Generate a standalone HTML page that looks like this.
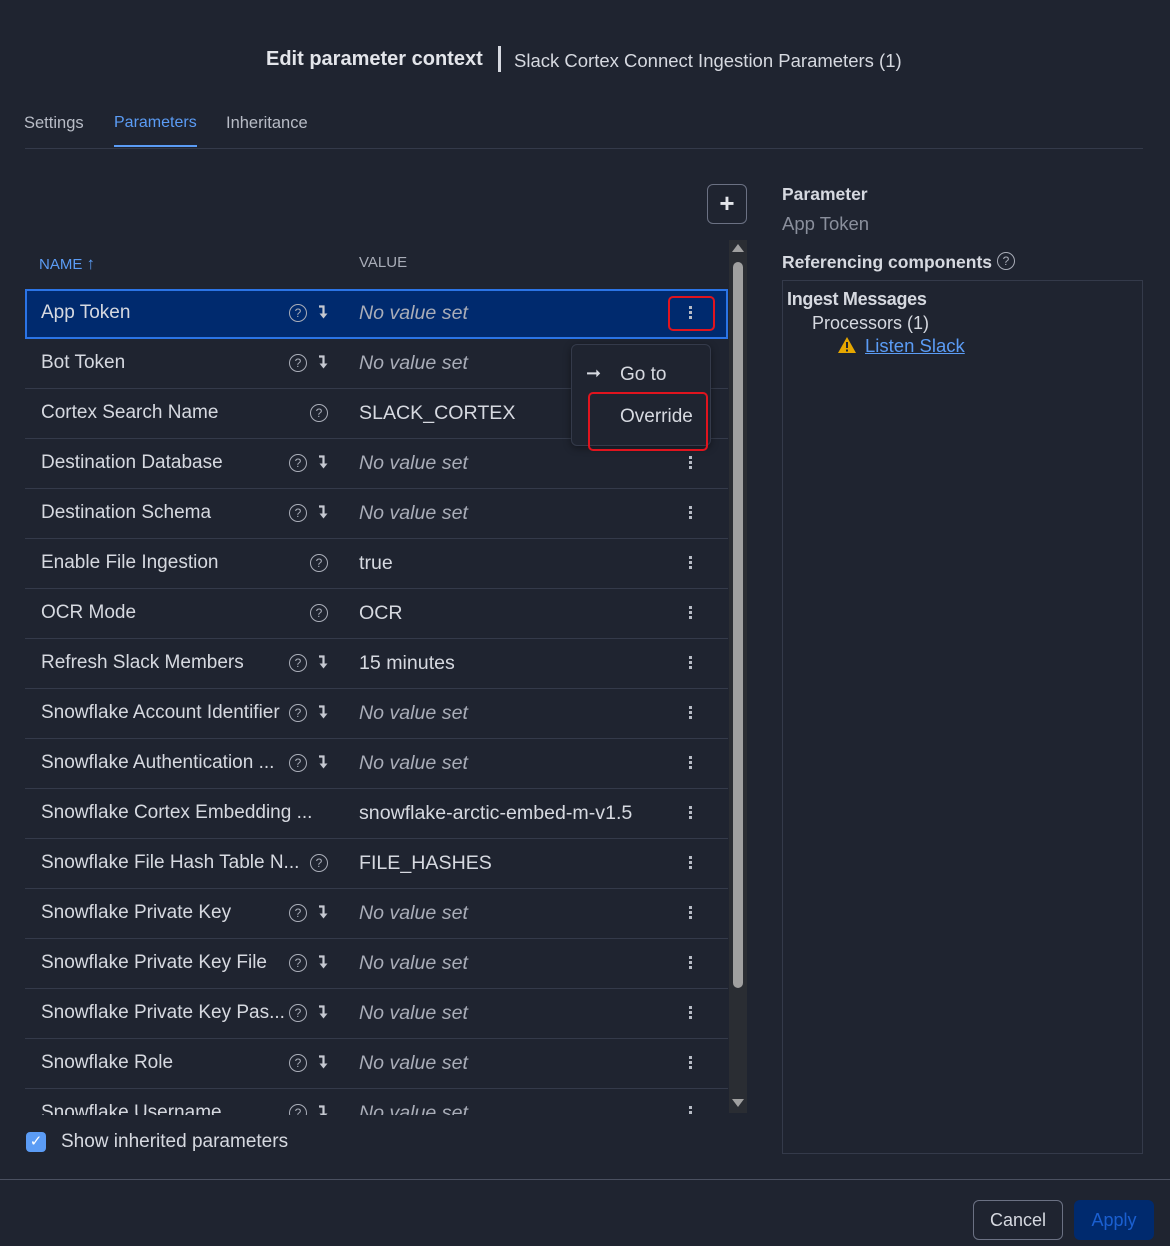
<!DOCTYPE html>
<html><head><meta charset="utf-8"><style>
*{box-sizing:border-box;margin:0;padding:0}
body{width:1170px;height:1246px;background:#1f2430;font-family:"Liberation Sans",sans-serif;color:#d6d9e0;position:relative;overflow:hidden}
.a{position:absolute;white-space:nowrap}
.row{position:absolute;left:25px;width:703px;height:50px;border-bottom:1px solid #343a4a}
.row .n{position:absolute;left:16px;top:13px;font-size:19px;color:#d6d9e0}
.row .v{position:absolute;left:334px;top:13px;font-size:19.6px;color:#d6d9e0}
.row .v.i{font-style:italic;color:#a9adb8}
.q{position:absolute;top:15px;width:18px;height:18px;border:1.3px solid #a9adb8;border-radius:50%;font-size:12px;color:#a9adb8;text-align:center;line-height:16px}
.ar{position:absolute;left:293px;top:16px}
.k{position:absolute;left:664px;top:17px;width:4px}
.k i{display:block;width:3px;height:3px;background:#b8bcc6;margin-bottom:2px}
</style></head><body>
<svg width="0" height="0" style="position:absolute"><defs><symbol id="ar" viewBox="0 0 10 14"><path d="M1 1.5 H5.5 V9.5" stroke="#c5c8d0" stroke-width="2.2" fill="none"/><path d="M1.5 8.5 L9.5 8.5 L5.5 13.5 Z" fill="#c5c8d0"/></symbol></defs></svg>
<div class="a" style="left:266px;top:48px;font-size:20px;font-weight:bold;color:#e3e5ea">Edit parameter context</div>
<div class="a" style="left:498px;top:46px;width:3px;height:26px;background:#d6d9e0"></div>
<div class="a" style="left:514px;top:50px;font-size:18.5px;color:#d6d9e0">Slack Cortex Connect Ingestion Parameters (1)</div>
<div class="a" style="left:24px;top:114px;font-size:16.5px;color:#b8bcc6">Settings</div>
<div class="a" style="left:114px;top:114px;font-size:16px;color:#5b9cf5">Parameters</div>
<div class="a" style="left:114px;top:145px;width:83px;height:2px;background:#5b9cf5"></div>
<div class="a" style="left:226px;top:114px;font-size:16.5px;color:#b8bcc6">Inheritance</div>
<div class="a" style="left:25px;top:148px;width:1118px;height:1px;background:#343a4a"></div>

<div class="a" style="left:707px;top:184px;width:40px;height:40px;border:1.3px solid #6b7183;border-radius:6px;text-align:center;font-size:26px;line-height:36px;font-weight:bold;color:#e3e5ea">+</div>
<div class="a" style="left:39px;top:254px;font-size:15px;color:#5b9cf5">NAME <span style="font-size:17px;font-weight:bold">↑</span></div>
<div class="a" style="left:359px;top:254px;font-size:15px;color:#a9adb8">VALUE</div>

<div class="a" style="left:729px;top:240px;width:18px;height:873px;background:#2a2d33"></div>
<div class="a" style="left:733px;top:262px;width:10px;height:726px;background:#a0a0a0;border-radius:5px"></div>
<div class="a" style="left:732px;top:244px;width:0;height:0;border-left:6px solid transparent;border-right:6px solid transparent;border-bottom:8px solid #a0a0a0"></div>
<div class="a" style="left:732px;top:1099px;width:0;height:0;border-left:6px solid transparent;border-right:6px solid transparent;border-top:8px solid #a0a0a0"></div>

<div class="a" style="left:0;top:289px;width:728px;height:826px;overflow:hidden">
<div style="position:relative;left:0;top:-289px">
<div class="row" style="top:289px;background:#002a6e;border:2px solid #2b74e6"><span class="n" style="left:14px;top:11px">App Token</span><span class="q" style="left:262px;top:13px">?</span><svg class="ar" style="left:291px;top:14px" width="10" height="14"><use href="#ar"/></svg><span class="v i" style="left:332px;top:11px">No value set</span><span class="k" style="left:662px;top:15px"><i></i><i></i><i></i></span></div>
<div class="row" style="top:339px"><span class="n">Bot Token</span><span class="q" style="left:264px">?</span><svg class="ar" width="10" height="14"><use href="#ar"/></svg><span class="v i">No value set</span></div>
<div class="row" style="top:389px"><span class="n">Cortex Search Name</span><span class="q" style="left:285px">?</span><span class="v">SLACK_CORTEX</span></div>
<div class="row" style="top:439px"><span class="n">Destination Database</span><span class="q" style="left:264px">?</span><svg class="ar" width="10" height="14"><use href="#ar"/></svg><span class="v i">No value set</span><span class="k"><i></i><i></i><i></i></span></div>
<div class="row" style="top:489px"><span class="n">Destination Schema</span><span class="q" style="left:264px">?</span><svg class="ar" width="10" height="14"><use href="#ar"/></svg><span class="v i">No value set</span><span class="k"><i></i><i></i><i></i></span></div>
<div class="row" style="top:539px"><span class="n">Enable File Ingestion</span><span class="q" style="left:285px">?</span><span class="v">true</span><span class="k"><i></i><i></i><i></i></span></div>
<div class="row" style="top:589px"><span class="n">OCR Mode</span><span class="q" style="left:285px">?</span><span class="v">OCR</span><span class="k"><i></i><i></i><i></i></span></div>
<div class="row" style="top:639px"><span class="n">Refresh Slack Members</span><span class="q" style="left:264px">?</span><svg class="ar" width="10" height="14"><use href="#ar"/></svg><span class="v">15 minutes</span><span class="k"><i></i><i></i><i></i></span></div>
<div class="row" style="top:689px"><span class="n">Snowflake Account Identifier</span><span class="q" style="left:264px">?</span><svg class="ar" width="10" height="14"><use href="#ar"/></svg><span class="v i">No value set</span><span class="k"><i></i><i></i><i></i></span></div>
<div class="row" style="top:739px"><span class="n">Snowflake Authentication ...</span><span class="q" style="left:264px">?</span><svg class="ar" width="10" height="14"><use href="#ar"/></svg><span class="v i">No value set</span><span class="k"><i></i><i></i><i></i></span></div>
<div class="row" style="top:789px"><span class="n">Snowflake Cortex Embedding ...</span><span class="v">snowflake-arctic-embed-m-v1.5</span><span class="k"><i></i><i></i><i></i></span></div>
<div class="row" style="top:839px"><span class="n">Snowflake File Hash Table N...</span><span class="q" style="left:285px">?</span><span class="v">FILE_HASHES</span><span class="k"><i></i><i></i><i></i></span></div>
<div class="row" style="top:889px"><span class="n">Snowflake Private Key</span><span class="q" style="left:264px">?</span><svg class="ar" width="10" height="14"><use href="#ar"/></svg><span class="v i">No value set</span><span class="k"><i></i><i></i><i></i></span></div>
<div class="row" style="top:939px"><span class="n">Snowflake Private Key File</span><span class="q" style="left:264px">?</span><svg class="ar" width="10" height="14"><use href="#ar"/></svg><span class="v i">No value set</span><span class="k"><i></i><i></i><i></i></span></div>
<div class="row" style="top:989px"><span class="n">Snowflake Private Key Pas...</span><span class="q" style="left:264px">?</span><svg class="ar" width="10" height="14"><use href="#ar"/></svg><span class="v i">No value set</span><span class="k"><i></i><i></i><i></i></span></div>
<div class="row" style="top:1039px"><span class="n">Snowflake Role</span><span class="q" style="left:264px">?</span><svg class="ar" width="10" height="14"><use href="#ar"/></svg><span class="v i">No value set</span><span class="k"><i></i><i></i><i></i></span></div>
<div class="row" style="top:1089px"><span class="n">Snowflake Username</span><span class="q" style="left:264px">?</span><svg class="ar" width="10" height="14"><use href="#ar"/></svg><span class="v i">No value set</span><span class="k"><i></i><i></i><i></i></span></div>
</div></div>

<div class="a" style="left:668px;top:296px;width:47px;height:35px;border:2px solid #e0141e;border-radius:5px"></div>
<div class="a" style="left:571px;top:344px;width:140px;height:102px;background:#1f2430;border:1px solid #343a4a;border-radius:6px;box-shadow:0 2px 8px rgba(0,0,0,.4)"></div>
<div class="a" style="left:586px;top:363px;font-size:18px;color:#d6d9e0">➞</div>
<div class="a" style="left:620px;top:364px;font-size:19px;color:#d6d9e0">Go to</div>
<div class="a" style="left:620px;top:406px;font-size:19px;color:#d6d9e0">Override</div>
<div class="a" style="left:588px;top:392px;width:120px;height:59px;border:2px solid #e0141e;border-radius:5px"></div>

<div class="a" style="left:782px;top:184px;font-size:17.5px;font-weight:bold;color:#d6d9e0">Parameter</div>
<div class="a" style="left:782px;top:213px;font-size:18.5px;color:#8a8f9c">App Token</div>
<div class="a" style="left:782px;top:252px;font-size:17.5px;font-weight:bold;color:#d6d9e0">Referencing components</div>
<div class="a q" style="left:997px;top:252px">?</div>
<div class="a" style="left:782px;top:280px;width:361px;height:874px;border:1px solid #343a4a"></div>
<div class="a" style="left:787px;top:289px;font-size:18px;font-weight:bold;color:#d6d9e0;letter-spacing:-0.3px">Ingest Messages</div>
<div class="a" style="left:812px;top:313px;font-size:18px;color:#d6d9e0">Processors (1)</div>
<svg class="a" style="left:837px;top:336px" width="20" height="18" viewBox="0 0 20 18"><path d="M10 1 L19 17 L1 17 Z" fill="#e6a700"/><rect x="9" y="6" width="2" height="6" fill="#1f2430"/><rect x="9" y="13.5" width="2" height="2" fill="#1f2430"/></svg>
<div class="a" style="left:865px;top:335px;font-size:18.5px;color:#5b9cf5;text-decoration:underline">Listen Slack</div>

<div class="a" style="left:26px;top:1132px;width:20px;height:20px;background:#5b9cf5;border-radius:4px;color:#fff;font-size:15px;text-align:center;line-height:20px">✓</div>
<div class="a" style="left:61px;top:1131px;font-size:19px;color:#d6d9e0">Show inherited parameters</div>

<div class="a" style="left:0;top:1179px;width:1170px;height:1px;background:#4a5060"></div>
<div class="a" style="left:973px;top:1200px;width:90px;height:40px;border:1.3px solid #6b7183;border-radius:6px;text-align:center;line-height:38px;font-size:18px;color:#d6d9e0">Cancel</div>
<div class="a" style="left:1074px;top:1200px;width:80px;height:40px;background:#002a6e;border-radius:6px;text-align:center;line-height:40px;font-size:18px;color:#1a5fd0">Apply</div>
</body></html>
